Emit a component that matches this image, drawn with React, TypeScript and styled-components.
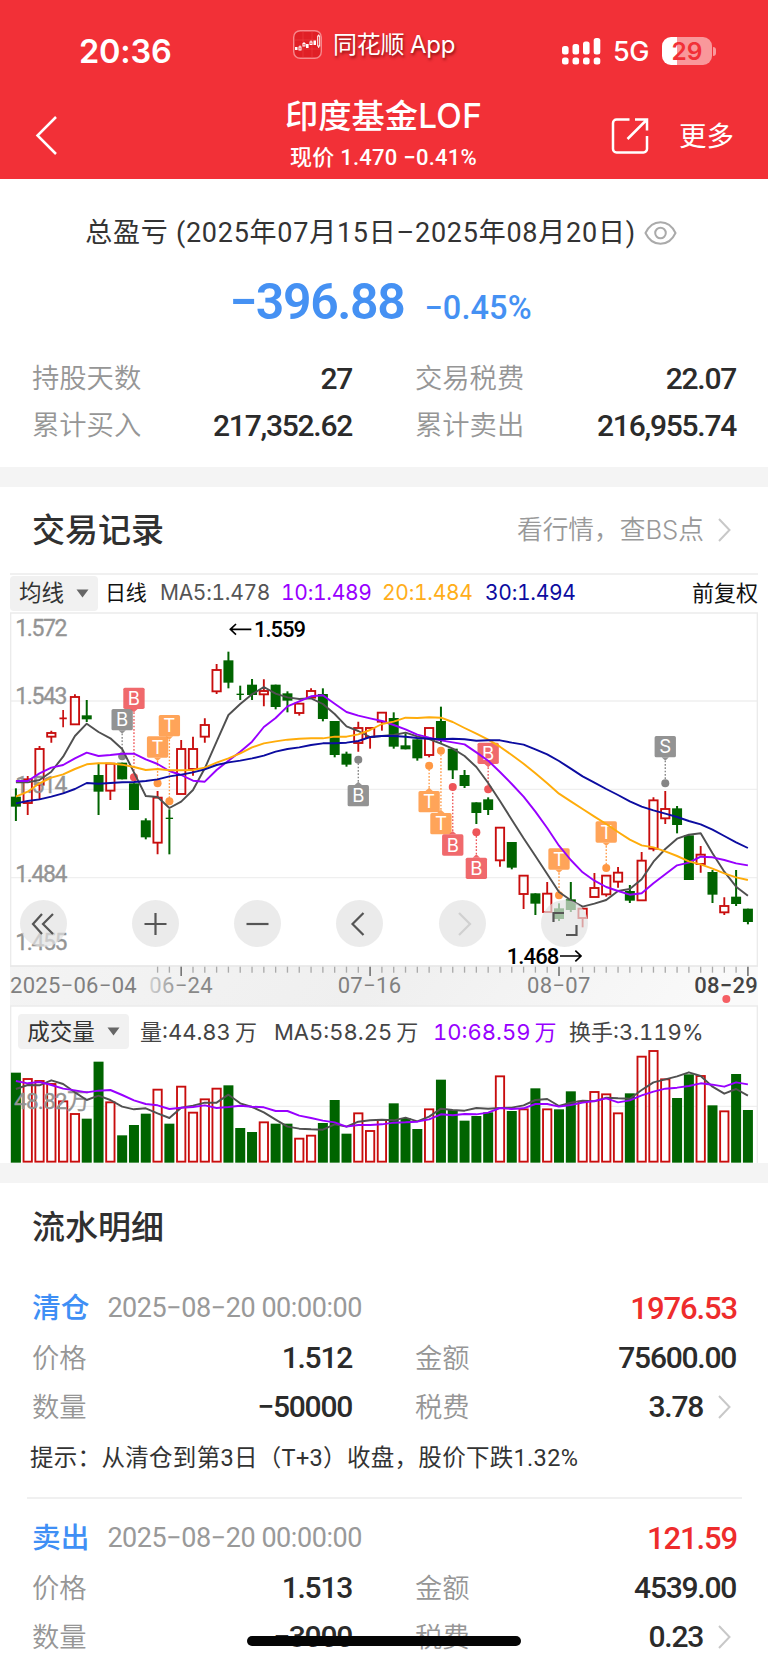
import React from 'react';
import styled, { createGlobalStyle } from 'styled-components';

const Global = createGlobalStyle`
  * { box-sizing: border-box; }
  body { margin: 0; background: #fff; }
`;

const cjk = '"Noto Sans CJK SC", sans-serif';
const din = `Roboto, ${cjk}`;
const ui = `Inter, ${cjk}`;

const Screen = styled.div`
  position: relative;
  width: 768px;
  height: 1663px;
  overflow: hidden;
  background: #fff;
  color: #2b2b2b;
  font-family: ${din};
  line-height: 1;
  white-space: nowrap;
`;

/* header */
const Header = styled.header`
  height: 179px;
  background: #f23037;
  color: #fff;
`;
const StatusBar = styled.div`
  height: 90px;
  padding: 0 56px 0 79px;
  display: grid;
  grid-template-columns: 214px 1fr auto;
`;
const Clock = styled.div`
  padding-top: 35px;
  font: 600 32.5px/34px ${ui};
  letter-spacing: -0.2px;
`;
const AppTag = styled.div`
  display: flex;
  align-items: center;
  gap: 11px;
  height: 29px;
  margin-top: 30px;
  font: 400 24px/29px ${ui};
  text-shadow: 1px 2px 3px rgba(90, 0, 0, 0.7);
  span { letter-spacing: -0.2px; word-spacing: -1px; }
`;
const Signals = styled.div`
  display: flex;
  align-items: center;
  height: 28px;
  margin-top: 37px;
`;
const Network = styled.span`
  margin: 2px 13px 0 12px;
  font: 500 27px/28px ${ui};
  letter-spacing: -0.4px;
`;
const Battery = styled.div`
  position: relative;
  width: 50px;
  height: 28px;
  border-radius: 9px;
  background: linear-gradient(90deg, #fff 15px, #f9989b 15px);
  color: #f23037;
  font: 600 24.5px/28px ${ui};
  text-align: center;
  &::after {
    content: '';
    position: absolute;
    right: -4px;
    top: 10px;
    width: 3px;
    height: 9px;
    border-radius: 0 3px 3px 0;
    background: #f9989b;
  }
`;
const NavBar = styled.div`
  height: 89px;
  padding: 0 35px 0 34px;
  display: grid;
  grid-template-columns: 150px 1fr 150px;
`;
const NavBack = styled.div`
  padding: 24px 0 0 0;
`;
const NavTitle = styled.div`
  display: flex;
  flex-direction: column;
  align-items: center;
  h1 {
    height: 36px;
    margin: 6px 0 0;
    font: 500 33.3px/36px ${cjk};
  }
  h1 span { font-family: ${ui}; font-weight: 450; letter-spacing: 0.3px; }
  p {
    margin: 14px 0 0;
    font: 500 22px/24px ${din};
    letter-spacing: 0.25px;
  }
`;
const NavActions = styled.div`
  display: flex;
  align-items: flex-start;
  justify-content: flex-end;
  padding-top: 27px;
  gap: 30px;
  span { font-size: 27.5px; line-height: 40px; margin-right: -1px; }
`;

/* profit summary */
const Summary = styled.section`
  height: 288px;
  padding: 35px 32px 0;
`;
const Period = styled.div`
  display: flex;
  justify-content: center;
  align-items: center;
  gap: 8px;
  height: 38px;
  padding-right: 6px;
  font-size: 27px;
  letter-spacing: 0.75px;
  color: #333;
`;
const Profit = styled.div`
  display: flex;
  justify-content: center;
  align-items: baseline;
  gap: 20px;
  margin-top: 21px;
  height: 58px;
  color: #4591f3;
  padding-right: 7px;
  b { font-weight: 600; font-size: 50px; line-height: 58px; letter-spacing: -1.4px; }
  span { font-weight: 500; font-size: 32.5px; letter-spacing: 0.1px; }
`;
const Stats = styled.div`
  display: grid;
  grid-template-columns: 320px 321px;
  column-gap: 63px;
  grid-auto-rows: 47px;
  margin-top: 24px;
`;
const Stat = styled.div`
  display: flex;
  align-items: center;
`;
const StatLabel = styled.span`
  padding-bottom: 3px;
  font-family: ${cjk};
  font-weight: 350;
  font-size: 27.3px;
  color: #969696;
`;
const StatValue = styled.span`
  margin-left: auto;
  font-weight: 500;
  font-size: 30px;
  letter-spacing: -1.25px;
`;
const Band = styled.div`
  height: 20px;
  background: #f4f4f4;
`;

/* trade records */
const SectionHead = styled.div<{ $h: number }>`
  display: flex;
  align-items: center;
  height: ${(p) => p.$h}px;
  padding: 0 37px 0 32px;
  h2 { margin: 0; padding-bottom: 4px; font: 500 33px/40px ${cjk}; color: #303030; }
`;
const HeadLink = styled.div`
  display: flex;
  align-items: center;
  gap: 14px;
  margin-left: auto;
  font: 350 25.7px/30px ${ui};
  color: #999;
`;
const ChartBox = styled.div`
  position: relative;
  margin: 0 10px;
  border-top: 2px solid #f0f0f0;
`;
const Legend = styled.div`
  display: flex;
  align-items: center;
  height: 38px;
  padding-bottom: 2px;
  font: 400 21px/24px ${ui};
  letter-spacing: -0.3px;
  font-variant-numeric: tabular-nums;
`;
const VolumeLegend = styled(Legend)`
  height: 51px;
  padding: 0 0 0 8px;
  font-size: 22px;
  letter-spacing: 0;
`;
const Chip = styled.div<{ $w: number }>`
  display: flex;
  align-items: center;
  justify-content: center;
  gap: 12px;
  width: ${(p) => p.$w}px;
  height: 35px;
  border-radius: 4px;
  background: #f1f1f1;
  color: #333;
  font-size: 22.5px;
  letter-spacing: 0;
`;
const Item = styled.span<{ $c: string; $ml: number; $w: number }>`
  margin-left: ${(p) => p.$ml}px;
  width: ${(p) => p.$w}px;
  color: ${(p) => p.$c};
`;
const EndItem = styled.span`
  margin-left: auto;
  color: #111;
  font-size: 22px;
  letter-spacing: 0;
`;
const Drawing = styled.svg`
  display: block;
  width: 748px;
  overflow: visible;
`;
const Controls = styled.div`
  position: absolute;
  left: 10px;
  top: 325px;
  display: flex;
  gap: 55.3px;
`;
const Round = styled.button`
  width: 47px;
  height: 47px;
  padding: 0;
  border: 0;
  border-radius: 50%;
  background: rgba(226, 226, 226, 0.7);
  &:first-child { margin-right: 9.5px; }
  svg { display: block; }
`;

/* transaction list */
const DealList = styled.section`
  padding-top: 12px;
`;
const Deal = styled.article`
  padding: 0 32px;
`;
const DealHead = styled.div`
  display: flex;
  align-items: center;
  height: 50px;
  strong { padding-bottom: 4px; font: 500 28.7px/34px ${cjk}; color: #3f8ff5; }
  time { margin-left: 18px; font-size: 27px; color: #999; letter-spacing: -0.45px; }
  em { margin: 0 -1px 0 auto; font-style: normal; font-weight: 500; font-size: 31px; letter-spacing: -1.1px; color: #ee2c2c; }
`;
const DealGrid = styled(Stats)`
  grid-auto-rows: 48.5px;
  margin-top: 1px;
`;
const DealStat = styled(Stat)`
  svg { margin-left: 15px; margin-right: 5px; }
`;
const Tip = styled.p`
  height: 54px;
  margin: 0 -2px;
  font: 400 23.5px/54px ${din};
  letter-spacing: 0.31px;
  color: #333;
`;
const Divider = styled.hr`
  height: 2px;
  margin: 12px 26px 14px 27px;
  border: 0;
  background: #f0f0f0;
`;
const HomeIndicator = styled.div`
  position: absolute;
  left: 247px;
  top: 1636px;
  width: 274px;
  height: 10px;
  border-radius: 5px;
  background: #050505;
`;

/* Chart data. Vertical values are plot units, three to a pixel. */
type Candle = [up: 0 | 1, high: number, top: number, bottom: number, low: number];
const candles: Candle[] = [
  [0, 565, 590, 620, 663], [1, 528, 537, 610, 645], [1, 438, 446, 555, 600], [1, 392, 398, 411, 428],
  [1, 330, 354, 356, 382], [1, 283, 290, 374, 374], [0, 300, 346, 358, 366], [0, 490, 525, 575, 645],
  [1, 490, 490, 573, 600], [0, 488, 488, 538, 538], [0, 550, 550, 630, 630], [0, 655, 661, 712, 718],
  [1, 573, 592, 729, 763], [0, 628, 653, 657, 763], [1, 420, 446, 583, 583], [1, 410, 446, 508, 527],
  [1, 355, 374, 411, 428], [1, 192, 209, 275, 282], [0, 155, 181, 248, 265], [0, 257, 281, 285, 300],
  [0, 237, 254, 285, 300], [1, 238, 272, 284, 319], [0, 254, 254, 321, 328], [0, 274, 280, 302, 337],
  [1, 310, 310, 340, 347], [1, 265, 272, 294, 294], [0, 265, 282, 357, 364], [0, 363, 363, 465, 472],
  [0, 455, 461, 494, 500], [1, 365, 383, 430, 455], [1, 383, 383, 412, 446], [1, 337, 337, 366, 392],
  [0, 337, 354, 440, 446], [0, 400, 436, 448, 448], [0, 418, 418, 475, 482], [1, 383, 383, 466, 472],
  [0, 320, 363, 421, 428], [0, 446, 446, 511, 537], [0, 510, 525, 558, 564], [0, 607, 607, 639, 672],
  [0, 592, 598, 630, 645], [1, 682, 682, 782, 800], [0, 726, 726, 803, 808], [1, 826, 826, 883, 927],
  [0, 880, 880, 911, 945], [1, 846, 880, 937, 937], [0, 910, 925, 957, 963], [0, 846, 898, 930, 936],
  [1, 925, 925, 955, 982], [1, 819, 863, 892, 892], [1, 826, 826, 884, 890], [1, 801, 817, 846, 863],
  [0, 855, 873, 902, 909], [1, 756, 781, 902, 902], [1, 592, 600, 747, 754], [1, 573, 626, 656, 672],
  [0, 618, 625, 675, 700], [0, 706, 706, 840, 840], [1, 738, 763, 793, 818], [0, 810, 816, 884, 909],
  [1, 892, 917, 938, 945], [0, 810, 890, 912, 918], [0, 926, 926, 966, 973],
];
const ma5 = [547, 547, 540, 515, 470, 408, 371, 396, 415, 447, 517, 588, 591, 624, 605, 570, 505, 425, 345, 312, 283, 261, 281, 292, 297, 295, 312, 342, 379, 393, 411, 408, 405, 398, 409, 417, 431, 446, 468, 501, 549, 603, 659, 715, 768, 822, 876, 901, 920, 911, 900, 873, 867, 838, 785, 747, 716, 704, 700, 760, 815, 860, 887];
const ma10 = [543, 543, 520, 503, 495, 475, 458, 468, 465, 461, 461, 478, 492, 513, 525, 542, 545, 510, 482, 455, 425, 381, 354, 319, 304, 289, 286, 311, 336, 347, 355, 363, 375, 388, 404, 413, 421, 427, 433, 457, 482, 516, 552, 590, 635, 684, 737, 780, 817, 842, 861, 873, 884, 880, 850, 823, 796, 788, 770, 772, 780, 790, 796];
const ma20 = [590, 575, 550, 533, 523, 507, 493, 490, 490, 494, 501, 510, 507, 511, 511, 510, 503, 488, 475, 460, 442, 430, 424, 419, 416, 415, 415, 410, 410, 403, 390, 372, 365, 353, 354, 352, 353, 366, 384, 401, 419, 440, 465, 491, 520, 550, 581, 604, 627, 650, 672, 696, 719, 736, 742, 754, 768, 784, 793, 806, 820, 832, 840];
const ma30 = [610, 603, 598, 590, 580, 567, 549, 551, 549, 547, 546, 543, 538, 529, 524, 517, 508, 495, 487, 482, 475, 467, 455, 447, 442, 435, 430, 430, 428, 423, 411, 408, 408, 410, 414, 416, 418, 416, 418, 422, 421, 421, 428, 434, 448, 463, 483, 506, 529, 548, 567, 585, 604, 620, 631, 641, 651, 663, 673, 689, 708, 727, 744];
const volume = [338, 356, 362, 371, 423, 461, 476, 305, 426, 526, 495, 461, 388, 491, 379, 457, 417, 385, 376, 504, 516, 486, 491, 491, 535, 526, 489, 420, 521, 459, 512, 479, 430, 474, 507, 447, 359, 450, 482, 468, 457, 348, 453, 447, 385, 447, 448, 394, 424, 395, 402, 459, 400, 289, 272, 357, 414, 343, 347, 436, 453, 342, 450];
const vma5 = [387, 375, 376, 361, 372, 397, 420, 407, 420, 440, 448, 445, 460, 474, 443, 437, 428, 428, 404, 430, 441, 457, 479, 500, 506, 508, 509, 493, 500, 485, 481, 479, 481, 473, 484, 470, 446, 450, 452, 444, 446, 444, 443, 436, 420, 417, 438, 428, 422, 424, 413, 415, 416, 390, 367, 358, 349, 337, 348, 380, 401, 387, 407];
const vma10 = [363, 370, 366, 375, 386, 391, 397, 392, 390, 405, 421, 432, 436, 447, 443, 441, 436, 444, 441, 437, 440, 442, 453, 453, 467, 474, 482, 487, 500, 495, 495, 493, 488, 487, 485, 478, 463, 466, 462, 463, 458, 444, 447, 445, 432, 432, 440, 435, 428, 423, 415, 427, 421, 406, 395, 386, 383, 378, 370, 374, 380, 367, 373];

type Mark = [i: number, letter: string, color: string, boxTop: number, dot: number];
const GRAY = '#858585';
const RED = '#ee5558';
const ORANGE = '#ff9843';
const marks: Mark[] = [
  [9, 'B', GRAY, 327, 469], [10, 'B', RED, 263, 532], [12, 'T', ORANGE, 409, 550], [13, 'T', ORANGE, 345, 604],
  [29, 'B', GRAY, 555, 479], [35, 'T', ORANGE, 573, 497], [36, 'T', ORANGE, 639, 452], [37, 'B', RED, 703, 561],
  [39, 'B', RED, 773, 697], [40, 'B', RED, 428, 568], [46, 'T', ORANGE, 745, 886], [50, 'T', ORANGE, 664, 804],
  [55, 'S', GRAY, 408, 550],
];

const UP = '#c80d0d';
const DOWN = '#006400';
const xAt = (i: number) => 47.7 + i * 35.42;
const toPoints = (v: number[]) => v.map((y, i) => `${xAt(i).toFixed(1)},${y}`).join(' ');

function Line({ data, color }: { data: number[]; color: string }) {
  return <polyline points={toPoints(data)} fill="none" stroke={color} strokeWidth={5.8} strokeLinejoin="round" />;
}

function CandleShape({ c, i }: { c: Candle; i: number }) {
  const [up, high, top, bottom, low] = c;
  const x = xAt(i);
  if (!up)
    return (
      <g fill={DOWN}>
        <rect x={x - 3} y={high} width={6} height={low - high} />
        <rect x={x - (bottom - top < 6 ? 11 : 15)} y={top} width={bottom - top < 6 ? 22 : 30} height={bottom - top} />
      </g>
    );
  if (bottom - top < 4)
    return <path d={`M${x} ${high}V${low}M${x - 11} ${top + 1}h22`} stroke={UP} strokeWidth={5} />;
  return (
    <g fill="none" stroke={UP} strokeWidth={5.6}>
      <path d={`M${x} ${high}V${top}M${x} ${bottom}V${low}`} />
      <rect x={x - 12.5} y={top + 1} width={25} height={bottom - top - 2} />
    </g>
  );
}

function MarkShape({ m }: { m: Mark }) {
  const [i, letter, color, boxTop, dot] = m;
  const x = xAt(i);
  const above = boxTop < dot;
  const edge = above ? boxTop + 64 : boxTop;
  const tip = above ? edge + 10 : edge - 10;
  return (
    <g>
      <path d={`M${x} ${tip}V${dot}`} stroke={color} strokeWidth={4} strokeDasharray="5 5" />
      <g opacity={0.88} fill={color}>
        <rect x={x - 32} y={boxTop} width={64} height={64} rx={5} />
        <path d={`M${x - 11} ${edge}h22L${x} ${tip}z`} />
      </g>
      <text x={x} y={boxTop + 52} fontFamily="Inter" fontSize={56} textAnchor="middle" fill="#fff">{letter}</text>
      <circle cx={x} cy={dot} r={12} fill={color} />
    </g>
  );
}

function PriceChart() {
  const labels: [string, number][] = [['1.572', 107], ['1.543', 313], ['1.514', 579], ['1.484', 845], ['1.455', 1051]];
  return (
    <Drawing viewBox="30 39 2244 1059" height={353} fontFamily="Roboto">
      <path d="M30 303H2273M30 568H2273M30 833H2273" stroke="#efefef" strokeWidth={4} />
      <path d="M32 1097V39H2272V1097" fill="none" stroke="#ebebeb" strokeWidth={4} />
      {candles.map((c, i) => <CandleShape key={i} c={c} i={i} />)}
      {labels.map(([t, y]) => (
        <text key={t} x={46} y={y} fontSize={69} fill="#949494" stroke="#949494" strokeWidth={1} textLength={156}>{t}</text>
      ))}
      {marks.map((m) => <MarkShape key={m[0]} m={m} />)}
      <Line data={ma5} color="#505050" />
      <Line data={ma10} color="#9800ff" />
      <Line data={ma20} color="#ffac0a" />
      <Line data={ma30} color="#0c0ca0" />
      <g fontSize={66} fontWeight={500} fill="#000">
        <text x={762} y={111} textLength={156}>1.559</text>
        <text x={1520} y={1091} textLength={158}>1.468</text>
      </g>
      <path d="M754 88H692M708 72L691 88L708 104M1680 1068H1742M1726 1052L1743 1068L1726 1084" fill="none" stroke="#000" strokeWidth={5} />
    </Drawing>
  );
}

function TimeAxis() {
  const ticks = candles.map((_, i) => i).filter((i) => i >= 12);
  const dates: [string, number, string][] = [['06-24', 448, '#888'], ['07-16', 1013, '#808080'], ['08-07', 1581, '#808080'], ['08-29', 2083, '#444']];
  return (
    <Drawing viewBox="30 18 2244 120" height={40} fontFamily="Roboto">
      <defs>
        <linearGradient id="band" x1="0" y1="0" x2="1" y2="0.04">
          <stop offset="0" stopColor="#f4f4f4" />
          <stop offset="0.5" stopColor="#efefef" />
          <stop offset="1" stopColor="#fafafa" />
        </linearGradient>
        <linearGradient id="fade" gradientUnits="userSpaceOnUse" x1="430" y1="0" x2="550" y2="0">
          <stop offset="0" stopColor="#ddd" />
          <stop offset="1" stopColor="#888" />
        </linearGradient>
      </defs>
      <rect x={30} y={17} width={2244} height={121} fill="url(#band)" />
      <path d="M30 18H2274" stroke="#e6e6e6" strokeWidth={4} />
      {ticks.map((i) => (
        <path key={i} d={`M${xAt(i)} 20v${i % 16 === 14 ? 28 : 18}`} stroke={i % 16 === 14 ? '#777' : '#aaa'} strokeWidth={i % 16 === 14 ? 5 : 4} />
      ))}
      <g fontSize={66} fontWeight={400}>
        <text x={30} y={99} fill="#808080" textLength={380}>2025−06−04</text>
        {dates.map(([t, x, c], n) => (
          <text key={t} x={x} y={98} fill={n === 0 ? 'url(#fade)' : c} fontWeight={n === 3 ? 500 : 400} textLength={190}>{t.replace('-', '−')}</text>
        ))}
      </g>
      <circle cx={2179} cy={117} r={12} fill="#f55f64" />
    </Drawing>
  );
}

function VolumeChart() {
  return (
    <Drawing viewBox="30 291 2244 318" height={106}>
      <path d="M30 439H2273" stroke="#efefef" strokeWidth={4} />
      <path d="M32 138V609M2272 138V609M30 138H2274" stroke="#ebebeb" strokeWidth={4} />
      {volume.map((v, i) =>
        candles[i][0] ? (
          <rect key={i} x={xAt(i) - 12.5} y={v + 1} width={25} height={604 - v} fill="#fff" stroke={UP} strokeWidth={5.6} />
        ) : (
          <rect key={i} x={xAt(i) - 15} y={v} width={30} height={608 - v} fill={DOWN} />
        ),
      )}
      <text x={42} y={448} fontFamily={'Roboto, "Noto Sans CJK SC"'} fontSize={68} fill="#949494" stroke="#949494" strokeWidth={1} textLength={226}>48.82万</text>
      <Line data={vma5} color="#505050" />
      <Line data={vma10} color="#9800ff" />
    </Drawing>
  );
}

function Caret() {
  return <svg width="13" height="9" viewBox="0 0 13 9"><path d="M0.5 0.5h12L6.5 8.5z" fill="#666" /></svg>;
}
function Chevron() {
  return (
    <svg width="13" height="24" viewBox="0 0 13 24">
      <path d="M1 1L11.5 12L1 23" fill="none" stroke="#c8c8c8" strokeWidth="2" />
    </svg>
  );
}

const controls: [string, string][] = [
  ['M22 14L13 24L22 34M33 14L23 24L33 34', '#555'],
  ['M12.5 24H34.5M23.5 13V35', '#555'],
  ['M12.5 24H34.5', '#555'],
  ['M27.5 13L16.5 24L27.5 35', '#555'],
  ['M20 13L31 24L20 35', '#d0d0d0'],
  ['M12.5 22V13H23M25 35H35.5V25', '#555'],
];

interface DealData {
  kind: string;
  time: string;
  gain: string;
  price: string;
  amount: string;
  count: string;
  fee: string;
}
function DealView({ d, tip }: { d: DealData; tip?: string }) {
  return (
    <Deal>
      <DealHead>
        <strong>{d.kind}</strong>
        <time>{d.time}</time>
        <em>{d.gain}</em>
      </DealHead>
      <DealGrid>
        <DealStat><StatLabel>价格</StatLabel><StatValue>{d.price}</StatValue></DealStat>
        <DealStat><StatLabel>金额</StatLabel><StatValue>{d.amount}</StatValue></DealStat>
        <DealStat><StatLabel>数量</StatLabel><StatValue>{d.count}</StatValue></DealStat>
        <DealStat><StatLabel>税费</StatLabel><StatValue>{d.fee}</StatValue><Chevron /></DealStat>
      </DealGrid>
      {tip && <Tip>{tip}</Tip>}
    </Deal>
  );
}

export default function App() {
  return (
    <Screen>
      <Global />
      <Header>
        <StatusBar>
          <Clock>20:36</Clock>
          <AppTag>
            <svg width="29" height="29" viewBox="0 0 29 29">
              <rect x="0.7" y="0.7" width="27.6" height="27.6" rx="6.5" fill="#e01f26" stroke="#f7888c" strokeWidth="1.4" />
              <path d="M1 10H28M1 19H28M10 1V28M19 1V28" stroke="#f0454b" strokeWidth="0.5" />
              <g fill="#fff">
                <rect x="2" y="17" width="2.5" height="3" />
                <rect x="13" y="14" width="2.6" height="4" />
                <rect x="20.5" y="10.5" width="2.5" height="4.5" />
              </g>
              <g fill="none" stroke="#fff" strokeWidth="1">
                <rect x="6" y="17" width="2" height="3" />
                <path d="M7 15.5V17M11 12V13.5M18 10.5V12M25.7 4.5V6M25.7 16V18" />
                <rect x="10" y="13.5" width="2" height="2.5" />
                <rect x="17" y="12" width="2" height="2.5" />
                <rect x="24.7" y="6" width="2" height="10" />
              </g>
            </svg>
            <span>同花顺 App</span>
          </AppTag>
          <Signals>
            <svg width="39" height="28" viewBox="0 0 39 28" fill="#fff">
              {[[0, 9], [10.5, 7], [21, 4.5], [31.7, 1]].map(([x, y]) => (
                <g key={x}>
                  <rect x={x} y={y} width="6.6" height={17.5 - y} rx="2.5" />
                  <rect x={x} y="20.5" width="6.6" height="7" rx="2.5" />
                </g>
              ))}
            </svg>
            <Network>5G</Network>
            <Battery>29</Battery>
          </Signals>
        </StatusBar>
        <NavBar>
          <NavBack>
            <svg width="24" height="42" viewBox="0 0 24 42">
              <path d="M22 3L3.5 21.5L22 40" fill="none" stroke="#fff" strokeWidth="2.5" />
            </svg>
          </NavBack>
          <NavTitle>
            <h1>印度基金<span>LOF</span></h1>
            <p>现价 1.470 −0.41%</p>
          </NavTitle>
          <NavActions>
            <svg width="38" height="38" viewBox="0 0 38 38" fill="none" stroke="#fff" strokeWidth="2.5">
              <path d="M18.5 2.5H5.5a3.5 3.5 0 0 0-3.5 3.5v26a3.5 3.5 0 0 0 3.5 3.5h27a3.5 3.5 0 0 0 3.5-3.5V19" />
              <path d="M24 2.5H36V13.5M36 2.5L16.5 22" />
            </svg>
            <span>更多</span>
          </NavActions>
        </NavBar>
      </Header>

      <Summary>
        <Period>
          <span>总盈亏 (2025年07月15日–2025年08月20日)</span>
          <svg width="33" height="24" viewBox="0 0 33 24" fill="none" stroke="#aaa" strokeWidth="2">
            <path d="M1.5 12C5 4.5 10 1.2 16.5 1.2S28 4.5 31.5 12C28 19.5 23 22.8 16.5 22.8S5 19.5 1.5 12z" />
            <circle cx="16.5" cy="12" r="5.3" />
          </svg>
        </Period>
        <Profit><b>−396.88</b><span>−0.45%</span></Profit>
        <Stats>
          <Stat><StatLabel>持股天数</StatLabel><StatValue>27</StatValue></Stat>
          <Stat><StatLabel>交易税费</StatLabel><StatValue>22.07</StatValue></Stat>
          <Stat><StatLabel>累计买入</StatLabel><StatValue>217,352.62</StatValue></Stat>
          <Stat><StatLabel>累计卖出</StatLabel><StatValue>216,955.74</StatValue></Stat>
        </Stats>
      </Summary>
      <Band />

      <SectionHead $h={86}>
        <h2>交易记录</h2>
        <HeadLink>看行情，查BS点<Chevron /></HeadLink>
      </SectionHead>
      <ChartBox>
        <Legend>
          <Chip $w={88}>均线<Caret /></Chip>
          <Item $c="#111" $ml={7} $w={55}>日线</Item>
          <Item $c="#555" $ml={0} $w={121}>MA5:1.478</Item>
          <Item $c="#9800ff" $ml={0} $w={101}>10:1.489</Item>
          <Item $c="#ffae1a" $ml={0} $w={103}>20:1.484</Item>
          <Item $c="#0c0ca0" $ml={0} $w={92}>30:1.494</Item>
          <EndItem>前复权</EndItem>
        </Legend>
        <PriceChart />
        <TimeAxis />
        <VolumeLegend>
          <Chip $w={111}>成交量<Caret /></Chip>
          <Item $c="#444" $ml={11} $w={134}>量:44.83&thinsp;万</Item>
          <Item $c="#444" $ml={0} $w={159}>MA5:58.25&thinsp;万</Item>
          <Item $c="#9800ff" $ml={0} $w={136}>10:68.59&thinsp;万</Item>
          <Item $c="#444" $ml={0} $w={140}>换手:3.119%</Item>
        </VolumeLegend>
        <VolumeChart />
        <Controls>
          {controls.map(([d, color]) => (
            <Round key={d}>
              <svg width="47" height="47" viewBox="0 0 47 47">
                <path d={d} fill="none" stroke={color} strokeWidth="2.2" />
              </svg>
            </Round>
          ))}
        </Controls>
      </ChartBox>
      <Band />

      <SectionHead $h={88}>
        <h2>流水明细</h2>
      </SectionHead>
      <DealList>
        <DealView
          d={{ kind: '清仓', time: '2025−08−20 00:00:00', gain: '1976.53', price: '1.512', amount: '75600.00', count: '−50000', fee: '3.78' }}
          tip="提示：从清仓到第3日（T+3）收盘，股价下跌1.32%"
        />
        <Divider />
        <DealView d={{ kind: '卖出', time: '2025−08−20 00:00:00', gain: '121.59', price: '1.513', amount: '4539.00', count: '−3000', fee: '0.23' }} />
      </DealList>
      <HomeIndicator />
    </Screen>
  );
}
